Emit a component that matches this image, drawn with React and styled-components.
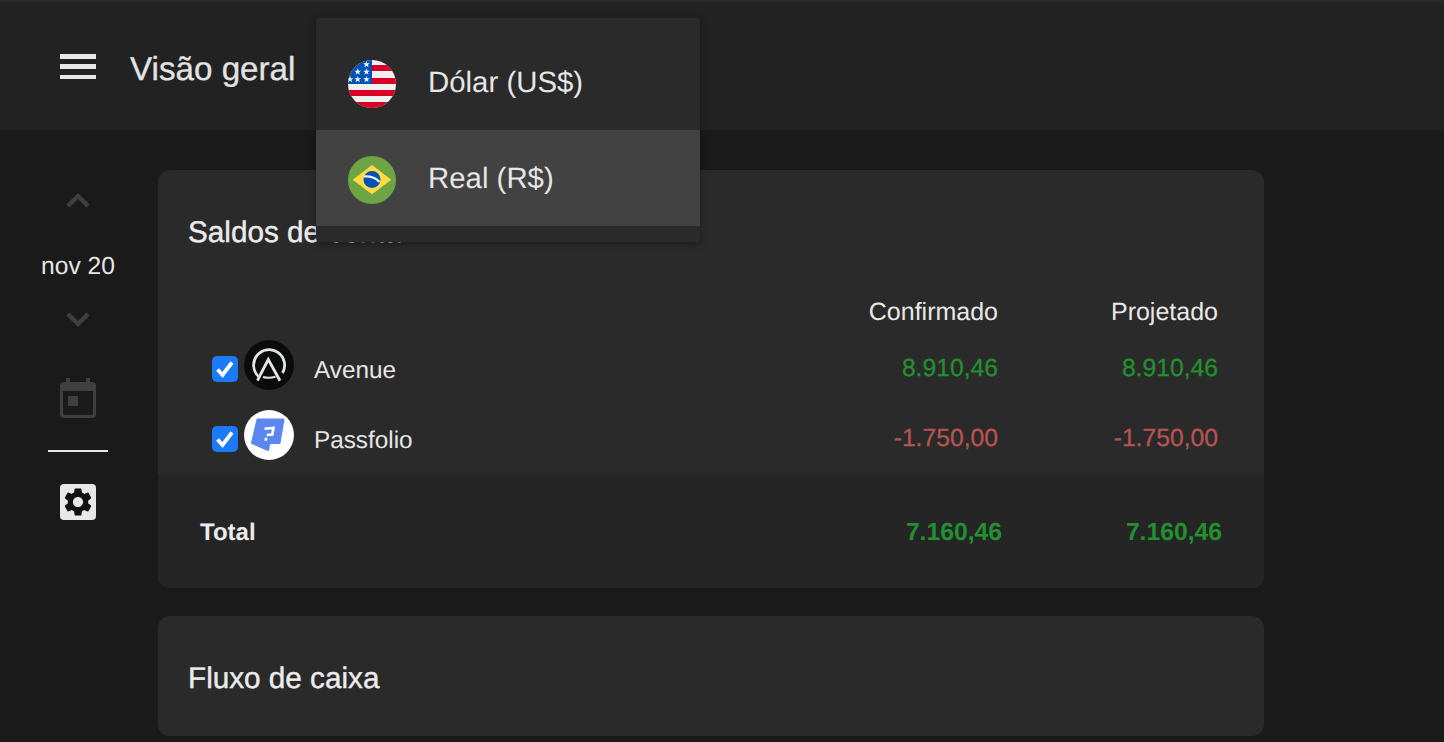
import React from "react";
import styled, { createGlobalStyle } from "styled-components";

const Global = createGlobalStyle`
  html, body { margin: 0; padding: 0; height: 742px; overflow: hidden; background: #1a1a1a; }
  body {
    font-family: "Liberation Sans", Arial, sans-serif;
    color: #ececec;
    text-rendering: geometricPrecision;
  }
  * { box-sizing: border-box; }
`;

const Page = styled.div`
  position: relative;
  width: 1444px;
  height: 742px;
  overflow: hidden;
  background: #1a1a1a;
`;

const Header = styled.header`
  height: 130px;
  background: #222222;
  border-top: 2px solid #2a2a2a;
  display: flex;
  align-items: center;
  padding: 0 0 0 60px;
  gap: 34px;
`;

const MenuIcon = styled.div`
  width: 36px;
  height: 25px;
  margin-top: 1px;
  display: flex;
  flex-direction: column;
  justify-content: space-between;
  & > span { display: block; height: 4.5px; background: #e8e8e8; }
`;

const PageTitle = styled.h1`
  margin: 0 0 -8px;
  font-size: 33.2px;
  font-weight: 400;
  line-height: 40px;
  color: #e4e4e4;
  -webkit-text-stroke: 0.3px #e4e4e4;
`;

const Dropdown = styled.div`
  position: absolute;
  left: 316px;
  top: 18px;
  width: 384px;
  padding: 16px 0;
  background: #2a2a2a;
  border-radius: 4px;
  box-shadow: 0 3px 8px rgba(0, 0, 0, 0.3);
  z-index: 5;
`;

const DropdownItem = styled.div`
  height: 96px;
  display: flex;
  align-items: center;
  gap: 32px;
  padding: 2px 0 0 32px;
  font-size: 29.4px;
  color: #e6e6e6;
  background: ${(p) => (p.$active ? "#424242" : "transparent")};
`;

const FlagIcon = styled.svg`
  flex: none;
  margin-top: 2px;
`;

const Body = styled.div`
  display: flex;
  align-items: flex-start;
`;

const Sidebar = styled.aside`
  width: 156px;
  display: flex;
  flex-direction: column;
  align-items: center;
  padding-top: 62px;
  flex: none;
`;

const DateLabel = styled.div`
  margin: 44px 0 30px;
  font-size: 24.6px;
  line-height: 30px;
  color: #e6e6e6;
`;

const Divider = styled.div`
  width: 60px;
  height: 2px;
  background: #e6e6e6;
  margin: 32px 0 32px;
`;

const SideIcon = styled.svg`
  display: block;
  flex: none;
`;

const CalendarIcon = styled(SideIcon)`
  margin-top: 50px;
`;

const GearBox = styled.div`
  width: 36px;
  height: 36px;
  background: #e8e8e8;
  border-radius: 4px;
  display: flex;
  align-items: center;
  justify-content: center;
`;

const Main = styled.main`
  width: 1106px;
  margin-left: 2px;
  padding-top: 40px;
  display: flex;
  flex-direction: column;
  gap: 28px;
`;

const Card = styled.section`
  background: #2a2a2a;
  border-radius: 12px;
  overflow: hidden;
`;

const CardTitle = styled.h2`
  margin: 0;
  padding: ${(p) => (p.$only ? "41px 30px 35px" : "41px 30px 0")};
  font-size: 29.7px;
  font-weight: 400;
  line-height: 44px;
  color: #ececec;
  -webkit-text-stroke: 0.4px #ececec;
`;

const ColumnHead = styled.div`
  display: grid;
  grid-template-columns: 1fr 220px 220px;
  height: 38px;
  margin-top: 37px;
  padding: 0 46px 0 54px;
  font-size: 25px;
  line-height: 40px;
  color: #e8e8e8;
  & > div { text-align: right; }
`;

const Row = styled.div`
  display: grid;
  grid-template-columns: 1fr 220px 220px;
  align-items: center;
  height: 70px;
  padding: 0 46px 0 54px;
`;

const Account = styled.div`
  display: flex;
  align-items: center;
`;

const Check = styled.div`
  width: 26px;
  height: 26px;
  margin: 8px 6px 0 0;
  border-radius: 5px;
  background: #1a7af8;
  display: flex;
  align-items: center;
  justify-content: center;
`;

const LogoIcon = styled.svg`
  flex: none;
`;

const AccountName = styled.span`
  margin: 12px 0 0 20px;
  font-size: 24.3px;
  line-height: 30px;
  color: #e6e6e6;
`;

const Amount = styled.div`
  padding-top: 8px;
  text-align: right;
  font-size: 24.7px;
  line-height: 30px;
  color: ${(p) => (p.$neg ? "#b85450" : "#23902f")};
  -webkit-text-stroke: 0.3px ${(p) => (p.$neg ? "#b85450" : "#23902f")};
`;

const TotalRow = styled.div`
  display: grid;
  grid-template-columns: 1fr 220px 220px;
  align-items: center;
  height: 114px;
  margin-top: 4px;
  padding: 4px 42px 0;
  background: #252525;
  font-weight: 700;
`;

const TotalLabel = styled.div`
  font-size: 24px;
  color: #ececec;
`;

const TotalAmount = styled.div`
  text-align: right;
  font-size: 24.7px;
  color: #23902f;
`;

const Chevron = ({ up }) => (
  <SideIcon width="24" height="16" viewBox="0 0 24 16">
    <path
      d={up ? "M2 14 L12 4 L22 14" : "M2 2 L12 12 L22 2"}
      fill="none"
      stroke="#3f3f3f"
      strokeWidth="4.4"
    />
  </SideIcon>
);

const Calendar = () => (
  <CalendarIcon width="36" height="40" viewBox="0 0 36 40">
    <path
      fill="#3f3f3f"
      fillRule="evenodd"
      d="M6 0h4v4h16V0h4v4h2a4 4 0 0 1 4 4v28a4 4 0 0 1-4 4H4a4 4 0 0 1-4-4V8a4 4 0 0 1 4-4h2zM3 13v22a2 2 0 0 0 2 2h26a2 2 0 0 0 2-2V13z"
    />
    <rect x="8" y="18" width="10" height="10" fill="#3f3f3f" />
  </CalendarIcon>
);

const Gear = () => (
  <svg width="34" height="34" viewBox="0 0 24 24">
    <path
      fill="#111"
      d="M19.14 12.94c.04-.3.06-.61.06-.94 0-.32-.02-.64-.07-.94l2.03-1.58c.18-.14.23-.41.12-.61l-1.92-3.32c-.12-.22-.37-.29-.59-.22l-2.39.96c-.5-.38-1.03-.7-1.62-.94l-.36-2.54c-.04-.24-.24-.41-.48-.41h-3.84c-.24 0-.43.17-.47.41l-.36 2.54c-.59.24-1.13.57-1.62.94l-2.39-.96c-.22-.08-.47 0-.59.22L2.74 8.87c-.12.21-.08.47.12.61l2.03 1.58c-.05.3-.09.63-.09.94s.02.64.07.94l-2.03 1.58c-.18.14-.23.41-.12.61l1.92 3.32c.12.22.37.29.59.22l2.39-.96c.5.38 1.03.7 1.62.94l.36 2.54c.05.24.24.41.48.41h3.84c.24 0 .44-.17.47-.41l.36-2.54c.59-.24 1.13-.56 1.62-.94l2.39.96c.22.08.47 0 .59-.22l1.92-3.32c.12-.22.07-.47-.12-.61l-2.01-1.58zM12 15.6c-1.98 0-3.6-1.62-3.6-3.6s1.62-3.6 3.6-3.6 3.6 1.62 3.6 3.6-1.62 3.6-3.6 3.6z"
    />
  </svg>
);

const star = (x, y) => (
  <polygon
    key={`${x}-${y}`}
    fill="#f0f0f0"
    points={`${x},${y - 3.4} ${x + 0.9},${y - 1} ${x + 3.4},${y - 1} ${x + 1.4},${y + 0.5} ${x + 2.1},${y + 3} ${x},${y + 1.5} ${x - 2.1},${y + 3} ${x - 1.4},${y + 0.5} ${x - 3.4},${y - 1} ${x - 0.9},${y - 1}`}
  />
);

const UsFlag = () => (
  <FlagIcon width="48" height="48" viewBox="0 0 48 48">
    <defs>
      <clipPath id="usc"><circle cx="24" cy="24" r="24" /></clipPath>
    </defs>
    <g clipPath="url(#usc)">
      <rect width="48" height="48" fill="#f0f0f0" />
      <rect x="24" y="5" width="24" height="6" fill="#d80027" />
      <rect x="24" y="18" width="24" height="6" fill="#d80027" />
      <rect y="30" width="48" height="6" fill="#d80027" />
      <rect y="42" width="48" height="6" fill="#d80027" />
      <path d="M0 0h24v24H0z" fill="#0052b4" />
      {[[18.5, 4.3], [9.7, 11.7], [18.5, 11.7], [2, 19.3], [9.7, 19.3], [18.5, 19.3]].map(([x, y]) => star(x, y))}
    </g>
  </FlagIcon>
);

const BrFlag = () => (
  <FlagIcon width="48" height="48" viewBox="0 0 48 48">
    <circle cx="24" cy="24" r="24" fill="#6da544" />
    <path d="M24 9 43.300 23.700 24 38.300 4.700 23.700z" fill="#ffda44" />
    <circle cx="24" cy="23.500" r="8.500" fill="#0052b4" />
    <path d="M15.800 20.500c6-.5 12 1.500 15.800 5.500" stroke="#f0f0f0" strokeWidth="2.200" fill="none" />
  </FlagIcon>
);

const AvenueLogo = () => (
  <LogoIcon width="50" height="50" viewBox="0 0 50 50">
    <circle cx="25" cy="25" r="25" fill="#0b0b0b" />
    <path d="M14.500 36.500A15.500 15.500 0 1 1 38.500 33" fill="none" stroke="#e0e6e6" strokeWidth="2.800" />
    <path d="M13.500 40.700 17 33.500 24.300 19.500 36 40.700" fill="none" stroke="#e0e6e6" strokeWidth="2.800" />
    <path d="M19 37c4 1.200 8 1.200 12.500-.2" fill="none" stroke="#e0e6e6" strokeWidth="2" />
  </LogoIcon>
);

const PassfolioLogo = () => (
  <LogoIcon width="50" height="50" viewBox="0 0 50 50">
    <circle cx="25" cy="25" r="25" fill="#ffffff" />
    <path
      d="M13.500 9.500H39.500L35.500 33H25.500L24 40L8 33z"
      fill="#5a88f0"
      stroke="#5a88f0"
      strokeWidth="2"
      strokeLinejoin="round"
    />
    <path d="M20.500 18.800 29.500 18 28.300 24.500 22.800 25" fill="none" stroke="#ffffff" strokeWidth="2.600" />
    <path d="M22.200 27.800 21.600 30.800" fill="none" stroke="#ffffff" strokeWidth="2.600" />
  </LogoIcon>
);

const CheckBox = () => (
  <Check>
    <svg width="26" height="26" viewBox="0 0 26 26">
      <path d="M5.500 13.500 10.500 19 20 6.500" fill="none" stroke="#fff" strokeWidth="3.800" />
    </svg>
  </Check>
);

const accounts = [
  { name: "Avenue", logo: <AvenueLogo />, value: "8.910,46" },
  { name: "Passfolio", logo: <PassfolioLogo />, value: "-1.750,00", neg: true },
];

export default function App() {
  return (
    <Page>
      <Global />
      <Header>
        <MenuIcon><span /><span /><span /></MenuIcon>
        <PageTitle>Visão geral</PageTitle>
      </Header>
      <Dropdown>
        <DropdownItem><UsFlag />Dólar (US$)</DropdownItem>
        <DropdownItem $active><BrFlag />Real (R$)</DropdownItem>
      </Dropdown>
      <Body>
        <Sidebar>
          <Chevron up />
          <DateLabel>nov 20</DateLabel>
          <Chevron />
          <Calendar />
          <Divider />
          <GearBox><Gear /></GearBox>
        </Sidebar>
        <Main>
          <Card>
            <CardTitle>Saldos de conta</CardTitle>
            <ColumnHead>
              <div />
              <div>Confirmado</div>
              <div>Projetado</div>
            </ColumnHead>
            {accounts.map((a) => (
              <Row key={a.name}>
                <Account>
                  <CheckBox />
                  {a.logo}
                  <AccountName>{a.name}</AccountName>
                </Account>
                <Amount $neg={a.neg}>{a.value}</Amount>
                <Amount $neg={a.neg}>{a.value}</Amount>
              </Row>
            ))}
            <TotalRow>
              <TotalLabel>Total</TotalLabel>
              <TotalAmount>7.160,46</TotalAmount>
              <TotalAmount>7.160,46</TotalAmount>
            </TotalRow>
          </Card>
          <Card>
            <CardTitle $only>Fluxo de caixa</CardTitle>
          </Card>
        </Main>
      </Body>
    </Page>
  );
}
